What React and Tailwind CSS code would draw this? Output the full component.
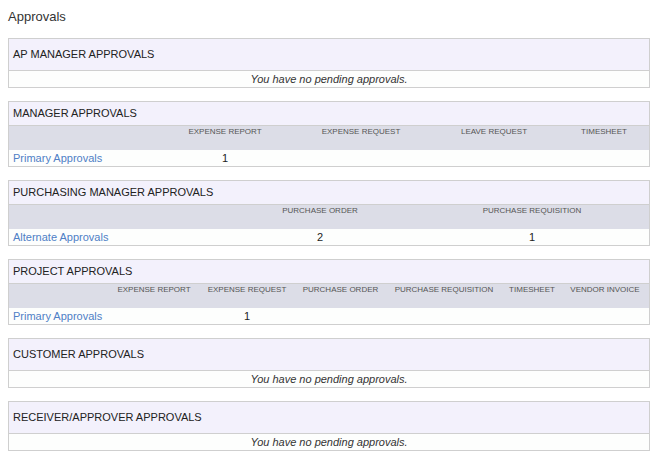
const sections = [
  { title: "AP MANAGER APPROVALS", empty: true },
  {
    title: "MANAGER APPROVALS",
    cols: "grid-cols-[148px_136px_136px_130px_1fr]",
    headers: ["EXPENSE REPORT", "EXPENSE REQUEST", "LEAVE REQUEST", "TIMESHEET"],
    label: "Primary Approvals",
    values: ["1", "", "", ""],
  },
  {
    title: "PURCHASING MANAGER APPROVALS",
    cols: "grid-cols-[205px_212px_212px_1fr]",
    headers: ["PURCHASE ORDER", "PURCHASE REQUISITION", ""],
    label: "Alternate Approvals",
    values: ["2", "1", ""],
  },
  {
    title: "PROJECT APPROVALS",
    cols: "grid-cols-[101px_88px_98px_89px_118px_58px_1fr]",
    headers: [
      "EXPENSE REPORT",
      "EXPENSE REQUEST",
      "PURCHASE ORDER",
      "PURCHASE REQUISITION",
      "TIMESHEET",
      "VENDOR INVOICE",
    ],
    label: "Primary Approvals",
    values: ["", "1", "", "", "", ""],
  },
  { title: "CUSTOMER APPROVALS", empty: true },
  { title: "RECEIVER/APPROVER APPROVALS", empty: true },
];

const Section = ({ section }) => {
  if (section.empty) {
    return (
      <div className="border border-[#cfcfcf] mb-[13px]">
        <div className="h-[32px] bg-[#f3f1fc] border-b border-[#cfcfcf] flex items-center pl-[4px] text-[11px] text-[#222]">
          {section.title}
        </div>
        <div className="h-[16px] bg-[#fdfefd] text-center italic text-[11px] leading-[16px] text-[#333]">
          You have no pending approvals.
        </div>
      </div>
    );
  }

  return (
    <div className="border border-[#cfcfcf] mb-[13px]">
      <div className="h-[24px] bg-[#f3f1fc] border-b border-[#cfcfcf] flex items-center pl-[4px] text-[11px] text-[#222]">
        {section.title}
      </div>
      <div className={`grid ${section.cols} h-[24px] bg-[#dcdde7]`}>
        <div />
        {section.headers.map((h, i) => (
          <div
            key={i}
            className="text-center whitespace-nowrap text-[8px] leading-[10px] pt-[1px] text-[#555]"
          >
            {h}
          </div>
        ))}
      </div>
      <div className={`grid ${section.cols} h-[16px] bg-[#fdfefd] leading-[16px]`}>
        <div className="pl-[4px] text-[11px] text-[#4f80c6] whitespace-nowrap">
          {section.label}
        </div>
        {section.values.map((v, i) => (
          <div key={i} className="text-center text-[11px] text-[#222]">
            {v}
          </div>
        ))}
      </div>
    </div>
  );
};

export default function App() {
  return (
    <div className="min-h-[462px] bg-white font-['Liberation_Sans',Arial,sans-serif] pt-[8px] pl-[8px] pr-[5px]">
      <div className="text-[13px] leading-[18px] text-[#333] mb-[12px]">Approvals</div>
      {sections.map((s) => (
        <Section key={s.title} section={s} />
      ))}
    </div>
  );
}
